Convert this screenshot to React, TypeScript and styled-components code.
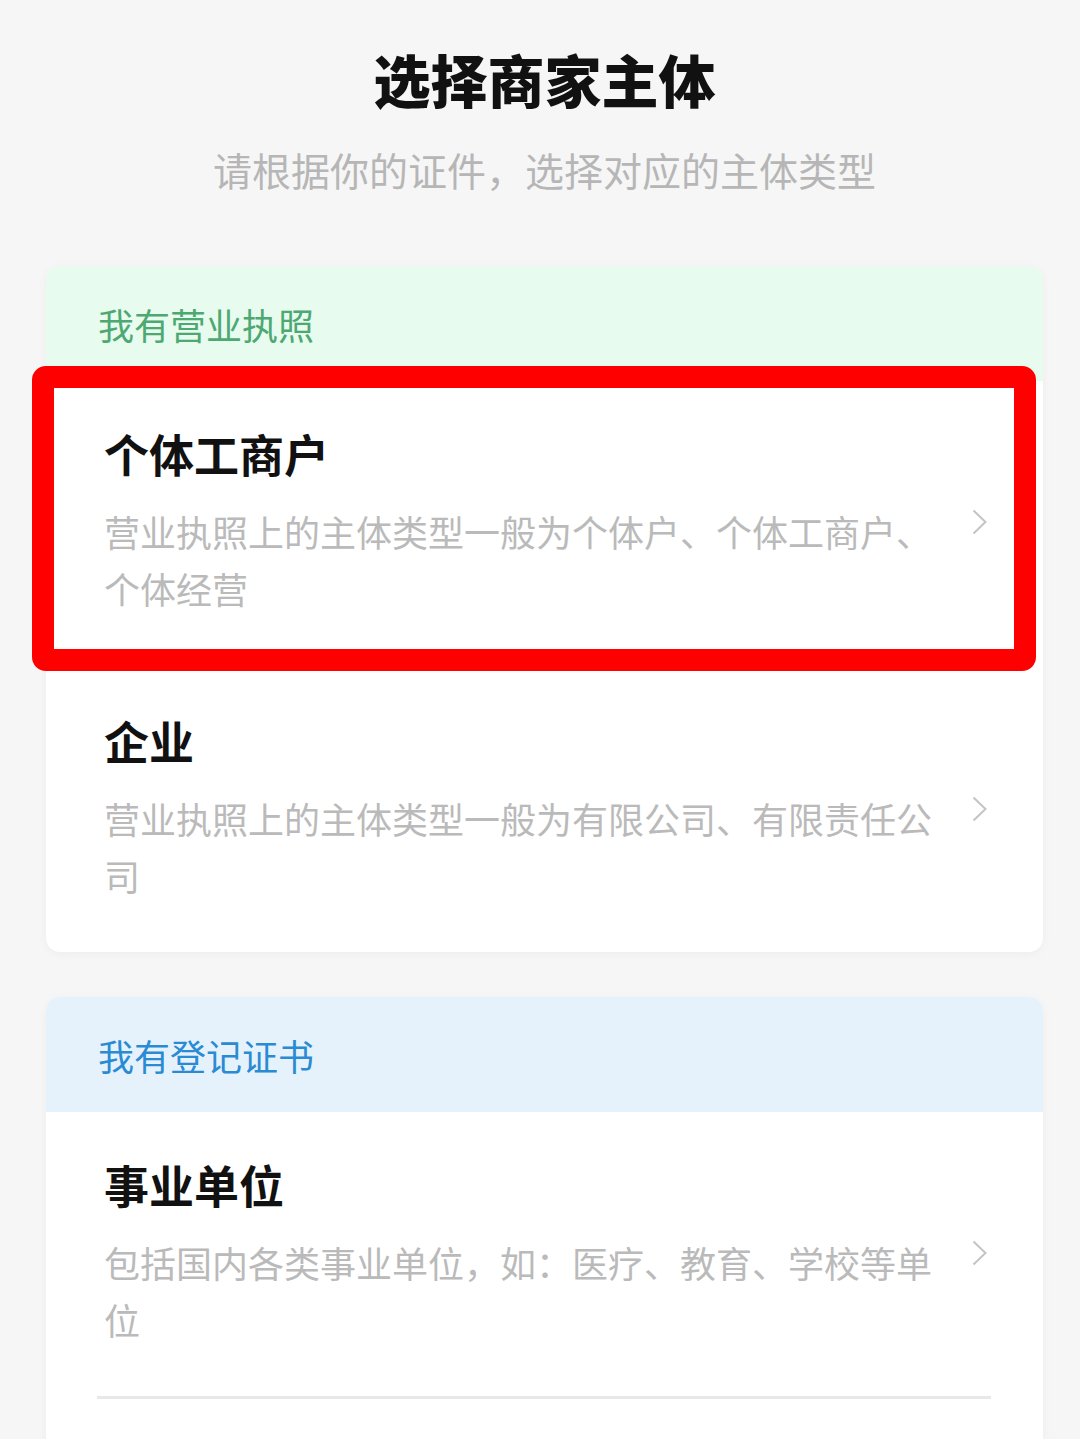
import React from 'react';
import styled, { createGlobalStyle } from 'styled-components';

const GlobalStyle = createGlobalStyle`
  html, body {
    margin: 0;
    padding: 0;
    background: #f6f6f6;
    font-family: "Noto Sans CJK SC", "Noto Sans", sans-serif;
  }
`;

interface Entity {
  id: string;
  name: string;
  desc: string;
  marked?: boolean;
}

interface Group {
  id: string;
  label: string;
  tone: 'green' | 'blue';
  items: Entity[];
  // the second card keeps going below the fold
  continues?: boolean;
}

const groups: Group[] = [
  {
    id: 'license',
    label: '我有营业执照',
    tone: 'green',
    items: [
      {
        id: 'individual',
        name: '个体工商户',
        desc: '营业执照上的主体类型一般为个体户、个体工商户、个体经营',
        marked: true,
      },
      {
        id: 'company',
        name: '企业',
        desc: '营业执照上的主体类型一般为有限公司、有限责任公司',
      },
    ],
  },
  {
    id: 'cert',
    label: '我有登记证书',
    tone: 'blue',
    continues: true,
    items: [
      {
        id: 'institution',
        name: '事业单位',
        desc: '包括国内各类事业单位，如：医疗、教育、学校等单位',
      },
    ],
  },
];

const tones = {
  green: { bg: '#e7fbef', fg: '#4ea872' },
  blue: { bg: '#e5f2fc', fg: '#2a8bd3' },
};

const Page = styled.div`
  padding: 44px 37px 0 46px;
  height: 1439px;
  box-sizing: border-box;
  overflow: hidden;
`;

const Heading = styled.header`
  display: flex;
  flex-direction: column;
  align-items: center;
  margin-bottom: 71px;
`;

const Title = styled.h1`
  margin: 0;
  font-size: 57px;
  line-height: 68px;
  font-weight: 900;
  color: #111;
`;

const Subtitle = styled.p`
  margin: 31px 0 0;
  font-size: 39px;
  line-height: 52px;
  color: #b6b6b6;
`;

const Card = styled.section<{ $continues?: boolean }>`
  background: #fff;
  border-radius: 14px;
  box-shadow: 0 2px 10px rgba(0, 0, 0, 0.04);
  margin-bottom: 45px;
  padding-bottom: ${(p) => (p.$continues ? '120px' : '0')};
`;

const CardHeader = styled.div<{ $tone: 'green' | 'blue' }>`
  height: 115px;
  display: flex;
  align-items: center;
  padding: 0 52px;
  background: ${(p) => tones[p.$tone].bg};
  color: ${(p) => tones[p.$tone].fg};
  font-size: 36px;
  border-radius: 14px 14px 0 0;
`;

const Item = styled.div`
  position: relative;
  padding: 42px 56px 48px 58px;
`;

const ItemName = styled.h3`
  margin: 0;
  font-size: 45px;
  line-height: 62px;
  font-weight: 700;
  color: #111;
`;

const DescRow = styled.div`
  display: flex;
  align-items: flex-start;
  justify-content: space-between;
  margin-top: 18px;
`;

const Desc = styled.p`
  margin: 0;
  width: 840px;
  font-size: 36px;
  line-height: 57px;
  color: #bababa;
`;

const Chevron = styled.svg`
  flex: none;
  margin-top: 6px;
  width: 15px;
  height: 26px;
`;

const Divider = styled.div`
  height: 3px;
  margin: 0 52px 0 51px;
  background: #e8e8e8;
`;

// red annotation frame drawn over the first option
const Marker = styled.div`
  position: absolute;
  left: -14px;
  top: -15px;
  right: 7px;
  bottom: -6px;
  border: 22px solid #fe0000;
  border-radius: 14px;
  pointer-events: none;
`;

const App: React.FC = () => {
  return (
    <>
      <GlobalStyle />
      <Page>
        <Heading>
          <Title>选择商家主体</Title>
          <Subtitle>请根据你的证件，选择对应的主体类型</Subtitle>
        </Heading>
        {groups.map((group) => (
          <Card key={group.id} $continues={group.continues}>
            <CardHeader $tone={group.tone}>{group.label}</CardHeader>
            {group.items.map((item, i) => (
              <React.Fragment key={item.id}>
                {i > 0 && <Divider />}
                <Item>
                  <ItemName>{item.name}</ItemName>
                  <DescRow>
                    <Desc>{item.desc}</Desc>
                    <Chevron viewBox="0 0 15 26">
                      <polyline
                        points="1.5,1.5 13.5,13 1.5,24.5"
                        fill="none"
                        stroke="#c4c4c4"
                        strokeWidth="2"
                      />
                    </Chevron>
                  </DescRow>
                  {item.marked && <Marker />}
                </Item>
              </React.Fragment>
            ))}
            {group.continues && <Divider />}
          </Card>
        ))}
      </Page>
    </>
  );
};

export default App;
